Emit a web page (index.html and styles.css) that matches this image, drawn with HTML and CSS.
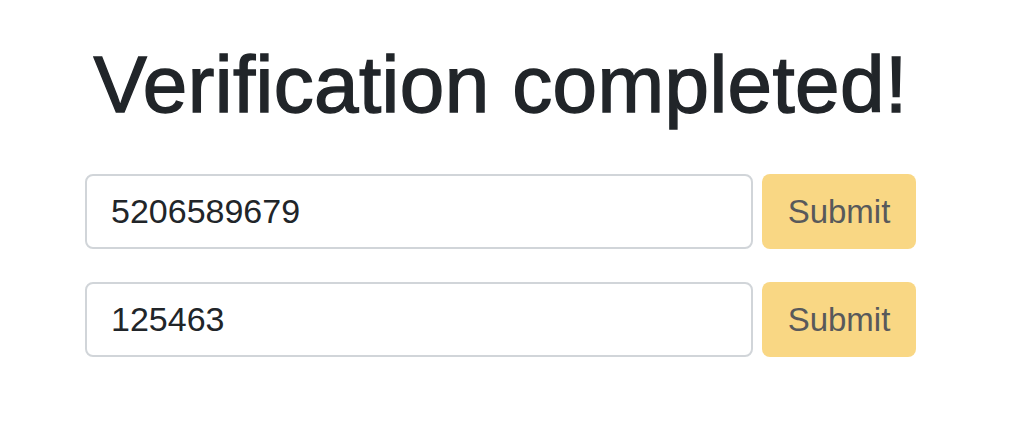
FILE: index.html
```html
<!DOCTYPE html>
<html lang="en">
<head>
<meta charset="utf-8">
<title>Verification completed!</title>
<link rel="stylesheet" href="styles.css">
</head>
<body>
<main class="container">
  <h1 class="title">Verification completed!</h1>
  <form class="row">
    <input class="field" type="text" value="5206589679">
    <button class="btn" type="button">Submit</button>
  </form>
  <form class="row">
    <input class="field" type="text" value="125463">
    <button class="btn" type="button">Submit</button>
  </form>
</main>
</body>
</html>
```
FILE: styles.css
```css
html, body {
  margin: 0;
  padding: 0;
  background: #ffffff;
}
body {
  font-family: "Liberation Sans", Arial, sans-serif;
  color: #212529;
}
.container {
  width: 831px;
  margin: 0 0 0 85px;
  padding-top: 39px;
}
.title {
  margin: 0 0 43px 0;
  font-size: 80px;
  font-weight: 500;
  line-height: 92px;
  text-align: center;
  color: #212529;
  letter-spacing: 0.4px;
  -webkit-text-stroke: 1.4px #212529;
}
.row {
  display: flex;
  gap: 9px;
  margin: 0 0 33px 0;
}
.field {
  flex: 1;
  box-sizing: border-box;
  height: 75px;
  border: 2px solid #d1d5d9;
  border-radius: 8px;
  padding: 0 24px;
  font-family: "Liberation Sans", Arial, sans-serif;
  font-size: 34px;
  color: #212529;
  background: #fff;
  outline: none;
}
.btn {
  box-sizing: border-box;
  width: 154px;
  height: 75px;
  border: none;
  border-radius: 8px;
  background: #f9d784;
  color: #58595b;
  font-family: "Liberation Sans", Arial, sans-serif;
  font-size: 33px;
  padding: 0;
}
```
